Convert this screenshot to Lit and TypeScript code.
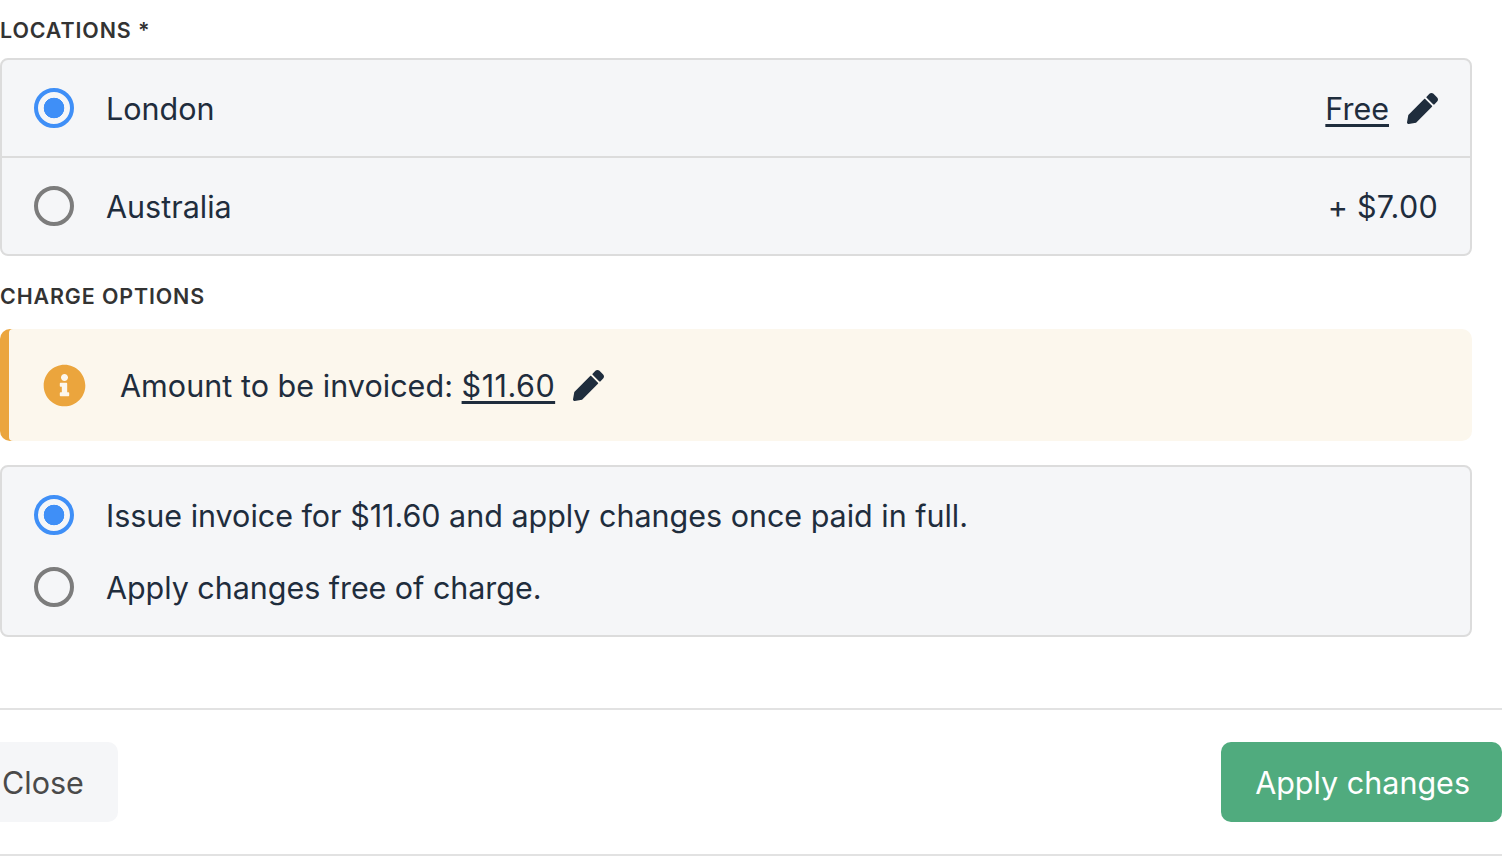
import { LitElement, html, css, svg } from 'lit';
import { customElement } from 'lit/decorators.js';

const pencil = svg`<path d="M497.9 142.1l-46.1 46.1c-4.7 4.7-12.3 4.7-17 0l-111-111c-4.7-4.7-4.7-12.3 0-17l46.1-46.1c18.7-18.7 49.1-18.7 67.9 0l60.1 60.1c18.8 18.7 18.8 49.1 0 67.9zM284.2 99.8L21.6 362.4.4 483.9c-2.9 16.4 11.4 30.6 27.8 27.8l121.5-21.3 262.6-262.6c4.7-4.7 4.7-12.3 0-17l-111-111c-4.8-4.7-12.4-4.7-17.1 0z"/>`;
const info = svg`<path d="M256 8C119 8 8 119.08 8 256c0 137 111 248 248 248s248-111 248-248C504 119.08 393 8 256 8zm0 110c23.2 0 42 18.8 42 42s-18.8 42-42 42-42-18.8-42-42 18.8-42 42-42zm56 254c0 6.63-5.37 12-12 12h-88c-6.63 0-12-5.37-12-12v-24c0-6.63 5.37-12 12-12h12v-64h-12c-6.63 0-12-5.37-12-12v-24c0-6.63 5.37-12 12-12h64c6.63 0 12 5.37 12 12v100h12c6.63 0 12 5.37 12 12v24z"/>`;

@customElement('app-root')
export class AppRoot extends LitElement {
  static styles = css`
    :host {
      display: block;
      width: 1502px;
      height: 866px;
      overflow: hidden;
      background: #fff;
      color: #1f2d3d;
      font-family: Inter, 'Liberation Sans', sans-serif;
      font-size: 30.5px;
    }
    .form {
      width: 1472px;
      padding-top: 15px;
    }
    .label {
      height: 30px;
      line-height: 30px;
      font-size: 21.4px;
      font-weight: 600;
      letter-spacing: 0.9px;
      color: #333;
    }
    .box {
      margin-top: 13px;
      border: 2px solid #dcdcdc;
      border-radius: 8px;
      background: #f5f6f8;
    }
    .row {
      display: flex;
      align-items: center;
      height: 96px;
      padding: 0 32px;
    }
    .row + .row {
      border-top: 2px solid #dcdcdc;
    }
    .radio {
      box-sizing: border-box;
      flex: none;
      width: 40px;
      height: 40px;
      margin-right: 32px;
      border: 4px solid #7c7c7c;
      border-radius: 50%;
    }
    .radio.on {
      border-color: #3f8ff7;
      background: radial-gradient(circle, #3f8ff7 0 10px, transparent 10.6px);
    }
    .name {
      flex: 1;
    }
    .link {
      text-decoration: underline;
      text-decoration-thickness: 3px;
      text-underline-offset: 4px;
      text-decoration-skip-ink: none;
    }
    .price {
      letter-spacing: 0.3px;
    }
    .amount {
      letter-spacing: 0.04px;
    }
    .amount .link {
      letter-spacing: 0.5px;
    }
    .long {
      letter-spacing: -0.02px;
    }
    .short {
      letter-spacing: -0.05px;
    }
    .pencil {
      flex: none;
      width: 31px;
      height: 31px;
      margin: 1px 0 0 18px;
      fill: currentColor;
    }
    .section {
      margin-top: 25px;
    }
    .alert {
      display: flex;
      align-items: center;
      box-sizing: border-box;
      height: 112px;
      margin-top: 18px;
      padding-left: 43px;
      border-radius: 10px;
      background: linear-gradient(to right, #eba53d 20px, transparent 20px);
    }
    .alert::before {
      content: '';
      position: absolute;
      left: 9px;
      width: 1463px;
      height: 112px;
      border-radius: 4px 10px 10px 4px;
      background: #fcf7ed;
    }
    .alert > * {
      position: relative;
    }
    .alert .info {
      flex: none;
      width: 43px;
      height: 43px;
      margin-right: 34px;
      fill: #eba53d;
    }
    .options {
      margin-top: 24px;
      padding: 12px 32px;
    }
    .option {
      display: flex;
      align-items: center;
      height: 72px;
    }
    .footer {
      display: flex;
      justify-content: space-between;
      height: 148px;
      box-sizing: border-box;
      width: 1502px;
      margin-top: 71px;
      padding-top: 32px;
      border-top: 2px solid #e2e2e2;
      border-bottom: 2px solid #e2e2e2;
    }
    button {
      height: 80px;
      border: 0;
      border-radius: 10px;
      font: inherit;
    }
    .close {
      margin-left: -33px;
      padding: 0 34px 0 35px;
      background: #f5f6f8;
      color: #4a4a4a;
    }
    .apply {
      padding: 0 32px 0 34px;
      background: #50ab7e;
      color: #fff;
    }
  `;

  render() {
    return html`
      <div class="form">
        <div class="label">LOCATIONS *</div>
        <div class="box">
          <div class="row">
            <span class="radio on"></span>
            <span class="name">London</span>
            <span class="link">Free</span>
            <svg class="pencil" viewBox="0 0 512 512">${pencil}</svg>
          </div>
          <div class="row">
            <span class="radio"></span>
            <span class="name">Australia</span>
            <span class="price">+ $7.00</span>
          </div>
        </div>
        <div class="label section">CHARGE OPTIONS</div>
        <div class="alert">
          <svg class="info" viewBox="0 0 512 512">${info}</svg>
          <span class="amount">Amount to be invoiced:&nbsp;<span class="link">$11.60</span></span>
          <svg class="pencil" viewBox="0 0 512 512">${pencil}</svg>
        </div>
        <div class="box options">
          <div class="option">
            <span class="radio on"></span>
            <span class="long">Issue invoice for $11.60 and apply changes once paid in full.</span>
          </div>
          <div class="option">
            <span class="radio"></span>
            <span class="short">Apply changes free of charge.</span>
          </div>
        </div>
      </div>
      <div class="footer">
        <button class="close">Close</button>
        <button class="apply">Apply changes</button>
      </div>
    `;
  }
}
